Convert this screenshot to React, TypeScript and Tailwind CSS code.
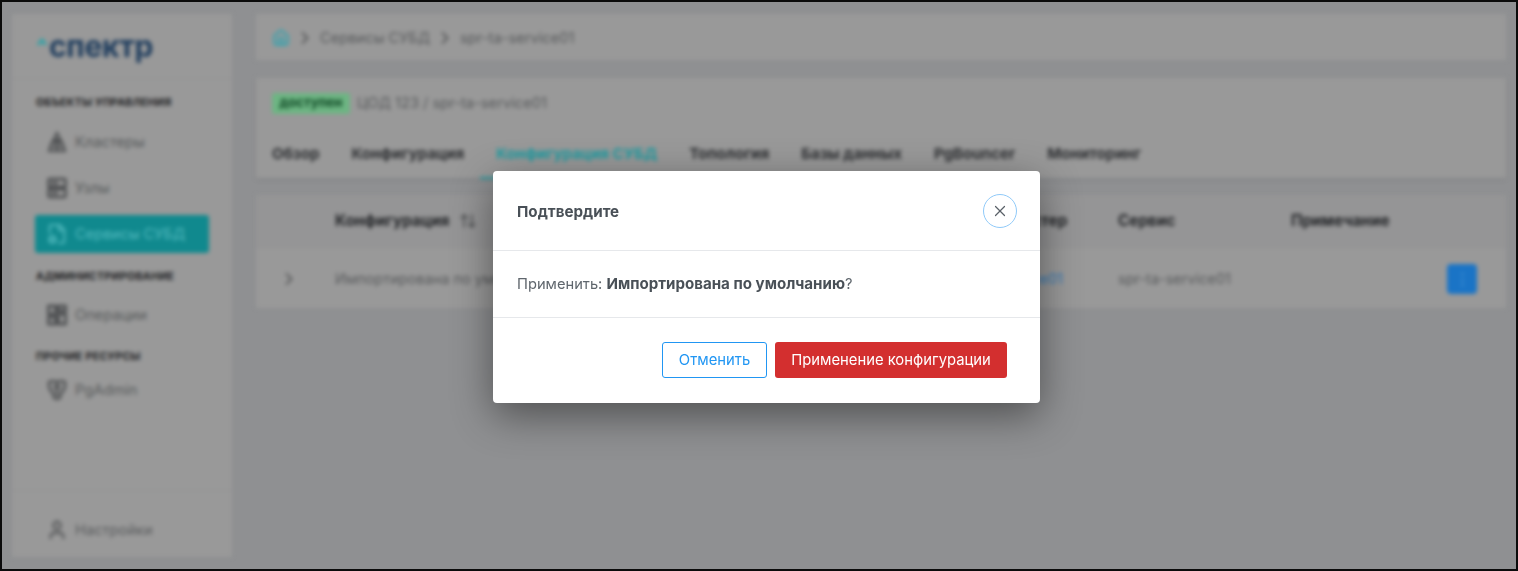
import { ChevronRight, FileCog, Home, User, X, ArrowUpDown } from "lucide-react";
import type { ReactNode } from "react";

const font = { fontFamily: "Inter, 'Noto Sans', sans-serif" };

const tabs = ["Обзор", "Конфигурация", "Конфигурация СУБД", "Топология", "Базы данных", "PgBouncer", "Мониторинг"];

function ClusterIcon() {
  return (
    <svg width="22" height="22" viewBox="0 0 22 22" fill="none" stroke="currentColor" strokeWidth="2">
      <path d="M11 2 7.5 9h7L11 2Z" />
      <path d="M6 11 3 20h16l-3-9H6Z" />
      <path d="M11 11v9M4 15.5h14" />
    </svg>
  );
}

function NodesIcon() {
  return (
    <svg width="20" height="22" viewBox="0 0 20 22" fill="none" stroke="currentColor" strokeWidth="2.4">
      <rect x="1.5" y="2" width="17" height="8" rx="1" />
      <rect x="1.5" y="12" width="17" height="8" rx="1" />
      <path d="M4 6h7M4 16h7" />
    </svg>
  );
}

function OperationsIcon() {
  return (
    <svg width="20" height="22" viewBox="0 0 20 22" fill="none" stroke="currentColor" strokeWidth="2.6">
      <rect x="1.5" y="2" width="7" height="8" />
      <rect x="11.5" y="2" width="7" height="5" />
      <rect x="1.5" y="13" width="7" height="7" />
      <rect x="11.5" y="10" width="7" height="10" />
    </svg>
  );
}

function PgAdminIcon() {
  return (
    <svg width="22" height="22" viewBox="0 0 22 22" fill="none" stroke="currentColor" strokeWidth="2.2">
      <path d="M3 3c3-1.500 5-1 8 0 3-1 5-1.500 8 0 .5 5-1 9-4 11l-1 5-3 1-3-1-1-5C4 12 2.500 8 3 3Z" />
      <path d="M11 3v14M7 8h8" />
    </svg>
  );
}

function SectionTitle({ children }: { children: ReactNode }) {
  return <p className="pl-[24px] text-[10.6px] font-bold tracking-[0.3px] text-[#1a1b1d] uppercase">{children}</p>;
}

function NavItem({ icon, label }: { icon: ReactNode; label: string }) {
  return (
    <div className="flex h-[38px] items-center gap-[7px] pl-[34px] text-[14.7px] text-[#57595b]">
      <span className="flex w-[22px] justify-center text-[#47494b]">{icon}</span>
      {label}
    </div>
  );
}

function Sidebar() {
  return (
    <aside className="flex h-[543px] w-[220px] shrink-0 flex-col bg-[#999999]">
      <div className="relative flex h-[65px] shrink-0 items-center border-b border-[#929394] pl-[37px]">
        <svg className="absolute top-[24px] left-[25px]" width="10" height="8" viewBox="0 0 10 8" fill="none" stroke="#1fa3a8" strokeWidth="2.6">
          <path d="M1 7 5 2l4 5" />
        </svg>
        <span className="text-[30px] leading-none font-bold tracking-[-0.3px] text-[#1f3d5e]">спектр</span>
      </div>
      <div className="flex-1 pt-[16px]">
        <SectionTitle>Объекты управления</SectionTitle>
        <div className="mt-[12px]">
          <NavItem icon={<ClusterIcon />} label="Кластеры" />
        </div>
        <div className="mt-[8px]">
          <NavItem icon={<NodesIcon />} label="Узлы" />
        </div>
        <div className="mx-[23px] mt-[8px] flex h-[38px] items-center gap-[7px] rounded-[3px] bg-[#10898e] pl-[11px] text-[14.7px] text-[#55bcc0]">
          <span className="flex w-[22px] justify-center">
            <FileCog size={22} strokeWidth={2} />
          </span>
          Сервисы СУБД
        </div>
        <div className="mt-[16px]">
          <SectionTitle>Администрирование</SectionTitle>
        </div>
        <div className="mt-[11px]">
          <NavItem icon={<OperationsIcon />} label="Операции" />
        </div>
        <div className="mt-[15px]">
          <SectionTitle>Прочие ресурсы</SectionTitle>
        </div>
        <div className="mt-[6px]">
          <NavItem icon={<PgAdminIcon />} label="PgAdmin" />
        </div>
      </div>
      <div className="h-[67px] shrink-0 border-t border-[#929394] pt-[20px]">
        <NavItem icon={<User size={22} strokeWidth={2} />} label="Настройки" />
      </div>
    </aside>
  );
}

function Content() {
  return (
    <main className="ml-[24px] flex w-[1250px] flex-col">
      <div className="flex h-[46px] items-center gap-[5px] bg-[#999999] pt-[2px] pl-[16px] text-[14.7px] text-[#57595b]">
        <Home size={18} className="text-[#2fa3b0]" strokeWidth={2.6} />
        <ChevronRight size={20} className="text-[#47494b]" />
        Сервисы СУБД
        <ChevronRight size={20} className="text-[#47494b]" />
        spr-ta-service01
      </div>

      <div className="mt-[18px] h-[100px] bg-[#999999] shadow-[0_2px_4px_rgba(0,0,0,0.08)]">
        <div className="flex items-center gap-[7px] pt-[14px] pl-[16px]">
          <span className="flex h-[21px] w-[78px] items-center justify-center rounded-[2px] bg-[#6db583] text-[13px] font-bold text-[#0c4522]">
            доступен
          </span>
          <span className="text-[14.7px] text-[#57595b]">ЦОД 123 / spr-ta-service01</span>
        </div>
        <div className="mt-[29px] flex gap-[32px] pl-[16px] text-[15.1px] font-bold text-[#2c2e31]">
          {tabs.map((tab) =>
            tab === "Конфигурация СУБД" ? (
              <span key={tab} className="relative text-[#1b9ba1]">
                {tab}
                <span className="absolute -right-[16px] -bottom-[13px] -left-[16px] h-[2px] bg-[#1b9ba1]" />
              </span>
            ) : (
              <span key={tab}>{tab}</span>
            ),
          )}
        </div>
      </div>

      <div className="mt-[17px] bg-[#999999]">
        <div className="grid h-[52px] grid-cols-[79px_615px_168px_173px_156px_30px] items-center bg-[#959596] text-[15.3px] font-bold text-[#1f2124]">
          <span />
          <span className="flex items-center gap-[10px]">
            Конфигурация
            <ArrowUpDown size={18} className="text-[#47494b]" />
          </span>
          <span className="pl-[53px]">Кластер</span>
          <span>Сервис</span>
          <span>Примечание</span>
          <span />
        </div>
        <div className="grid h-[61px] grid-cols-[79px_615px_168px_173px_156px_30px] items-center border-t border-[#929394] pt-[1px] text-[14.5px] text-[#57595b]">
          <ChevronRight size={20} className="ml-[23px] text-[#47494b]" />
          <span>Импортирована по умолчанию</span>
          <span className="text-[#2f78b8]">spr-ta-service01</span>
          <span>spr-ta-service01</span>
          <span />
          <button className="flex h-[30px] w-[30px] items-center justify-center rounded-[4px] bg-[#1a74c6] text-[#5fa5e0]">⋮</button>
        </div>
      </div>
    </main>
  );
}

function ConfirmModal() {
  return (
    <div className="absolute top-[169px] left-[491px] w-[547px] rounded-[4px] bg-white shadow-[0_12px_40px_rgba(0,0,0,0.45)]">
      <div className="flex h-[80px] items-center justify-between border-b border-[#e6e8eb] pr-[23.500px] pl-[24px]">
        <h2 className="pt-[3px] text-[15.2px] font-bold text-[#495057]">Подтвердите</h2>
        <button className="flex h-[34px] w-[33.500px] items-center justify-center rounded-full border border-[#90caf9] text-[#5a6168]">
          <X size={18} strokeWidth={1.6} />
        </button>
      </div>
      <div className="flex h-[67px] items-center border-b border-[#e6e8eb] pt-[1px] pl-[24px] text-[14.7px] text-[#5f666d]">
        <span>
          Применить: <b className="text-[15.1px] font-bold text-[#495057]">Импортирована по умолчанию</b>?
        </span>
      </div>
      <div className="flex h-[85px] items-start justify-end gap-[8px] pt-[24px] pr-[33px] text-[14.8px]">
        <button className="h-[36px] w-[105px] rounded-[3px] border border-[#2196f3] text-[#2196f3]">Отменить</button>
        <button className="h-[36px] w-[232px] rounded-[3px] bg-[#d32f2f] text-white">Применение конфигурации</button>
      </div>
    </div>
  );
}

export default function App() {
  return (
    <div style={font} className="relative h-[571px] w-[1518px] overflow-hidden border-2 border-[#0b0b0b] bg-[#8f9092]">
      <div className="flex px-[10px] pt-[12px] blur-[2.2px]">
        <Sidebar />
        <Content />
      </div>
      <ConfirmModal />
    </div>
  );
}
